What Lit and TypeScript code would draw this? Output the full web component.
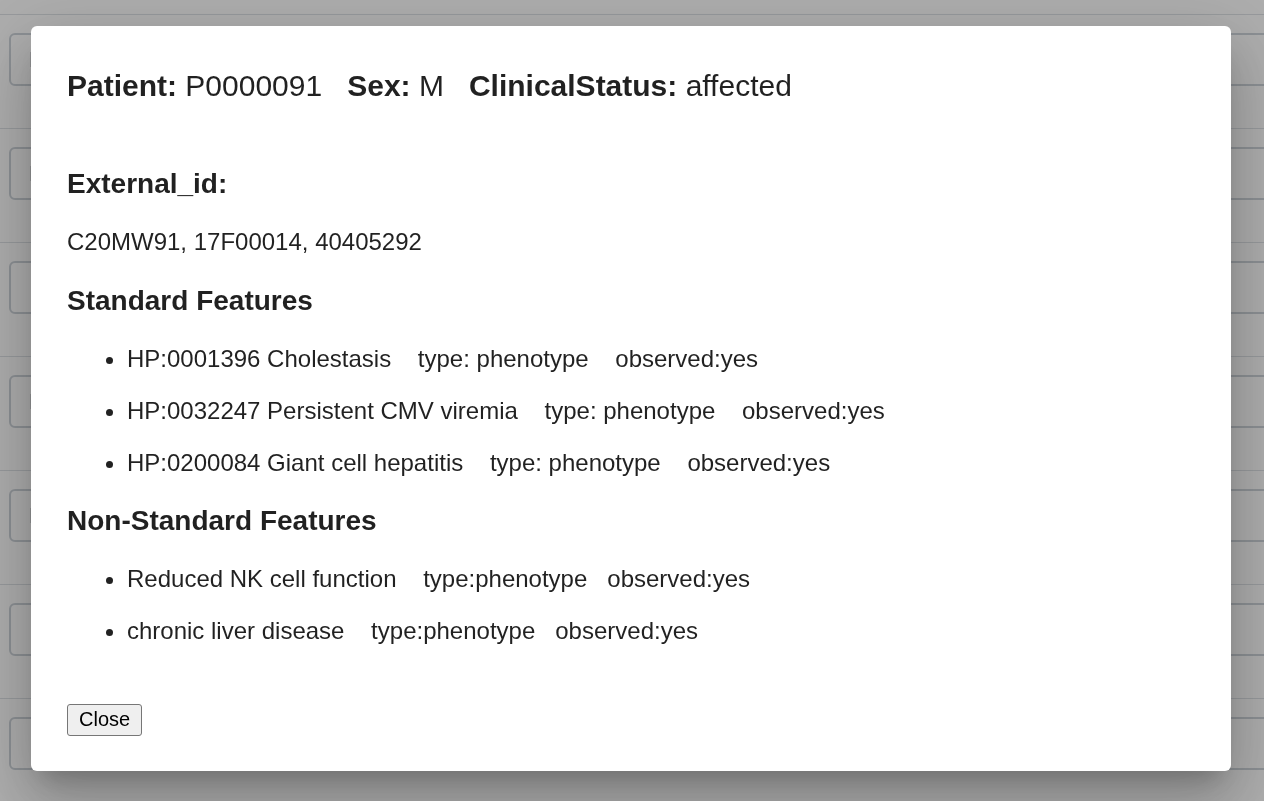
import { LitElement, html, css } from "lit";
import { customElement, property, state } from "lit/decorators.js";

const NB = "\u00a0";

interface Feature {
  name: string;
  type: string;
  observed: string;
}

const standardFeatures: Feature[] = [
  { name: "HP:0001396 Cholestasis", type: "phenotype", observed: "yes" },
  { name: "HP:0032247 Persistent CMV viremia", type: "phenotype", observed: "yes" },
  { name: "HP:0200084 Giant cell hepatitis", type: "phenotype", observed: "yes" },
];

const nonStandardFeatures: Feature[] = [
  { name: "Reduced NK cell function", type: "phenotype", observed: "yes" },
  { name: "chronic liver disease", type: "phenotype", observed: "yes" },
];

@customElement("patient-dialog")
class PatientDialog extends LitElement {
  static styles = css`
    :host {
      display: block;
      width: 100%;
    }
    .panel {
      box-sizing: border-box;
      padding: 36px 36px 35px;
      border-radius: 6px;
      background: #fff;
      color: rgba(0, 0, 0, 0.87);
      font-size: 24px;
      line-height: 28px;
      box-shadow:
        0 17px 23px -11px rgba(0, 0, 0, 0.2),
        0 36px 57px 5px rgba(0, 0, 0, 0.14),
        0 14px 69px 12px rgba(0, 0, 0, 0.12);
    }
    .title {
      margin: 0 0 58px;
      font-size: 30px;
      font-weight: 400;
      line-height: 48px;
    }
    .heading {
      margin: 0 0 28px;
      font-size: 28px;
      font-weight: 700;
      line-height: 32px;
    }
    .ids {
      margin: 0 0 29px;
    }
    .features {
      display: grid;
      gap: 24px;
      margin: 0 0 28px;
      padding-left: 60px;
    }
    .features.last {
      margin-bottom: 59px;
    }
    .close {
      display: block;
      height: 32px;
      padding: 0 11px 2px;
      border: 1px solid #767676;
      border-radius: 3px;
      background: #efefef;
      color: #000;
      font: 20px "Liberation Sans", Arial, sans-serif;
    }
  `;

  @property() patient = "";
  @property() sex = "";
  @property() status = "";
  @property() ids = "";

  private close() {
    this.dispatchEvent(new CustomEvent("dismiss"));
  }

  render() {
    const gap3 = NB + NB + " ";
    const gap4 = NB + NB + NB + " ";
    return html`
      <div class="panel" role="dialog" aria-modal="true" aria-labelledby="title">
        <h1 class="title" id="title"><b>Patient:</b> ${this.patient}${gap3}<b>Sex:</b> ${this.sex}${gap3}<b>ClinicalStatus:</b> ${this.status}</h1>
        <h3 class="heading">External_id:</h3>
        <p class="ids">${this.ids}</p>
        <h3 class="heading">Standard Features</h3>
        <ul class="features">
          ${standardFeatures.map((f) => html`<li>${f.name}${gap4}type: ${f.type}${gap4}observed:${f.observed}</li>`)}
        </ul>
        <h3 class="heading">Non-Standard Features</h3>
        <ul class="features last">
          ${nonStandardFeatures.map((f) => html`<li>${f.name}${gap4}type:${f.type}${gap3}observed:${f.observed}</li>`)}
        </ul>
        <button class="close" type="button" @click=${this.close}>Close</button>
      </div>
    `;
  }
}

@customElement("app-root")
class AppRoot extends LitElement {
  static styles = css`
    :host {
      display: block;
      position: relative;
      height: 100vh;
      overflow: hidden;
      background: #fff;
      font-family: "Liberation Sans", Arial, sans-serif;
    }
    .rows {
      padding-top: 14px;
      will-change: transform;
    }
    .row {
      display: flex;
      padding: 18px 0 42px 9px;
      border-top: 1px solid #dee2e6;
    }
    .field {
      box-sizing: border-box;
      flex: none;
      width: calc(100% + 24px);
      height: 53px;
      padding: 0 18px;
      border: 2px solid #ced4da;
      border-radius: 6px;
      background: #fff;
      color: #495057;
      font: 22px "Liberation Sans", Arial, sans-serif;
    }
    .overlay {
      position: absolute;
      inset: 0;
      display: flex;
      align-items: flex-start;
      padding: 26px 33px 30px 31px;
      background: rgba(0, 0, 0, 0.32);
    }
  `;

  @state() private open = true;

  private rows = ["P", "P", "", "P", "P", "", ""];

  render() {
    return html`
      <div class="rows" ?inert=${this.open}>
        ${this.rows.map(
          (value, i) => html`<div class="row">
            <input class="field" type="text" aria-label="Row ${i + 1}" .value=${value} />
          </div>`,
        )}
      </div>
      ${this.open
        ? html`<div class="overlay">
            <patient-dialog
              patient="P0000091"
              sex="M"
              status="affected"
              ids="C20MW91, 17F00014, 40405292"
              @dismiss=${() => (this.open = false)}
            ></patient-dialog>
          </div>`
        : ""}
    `;
  }
}
